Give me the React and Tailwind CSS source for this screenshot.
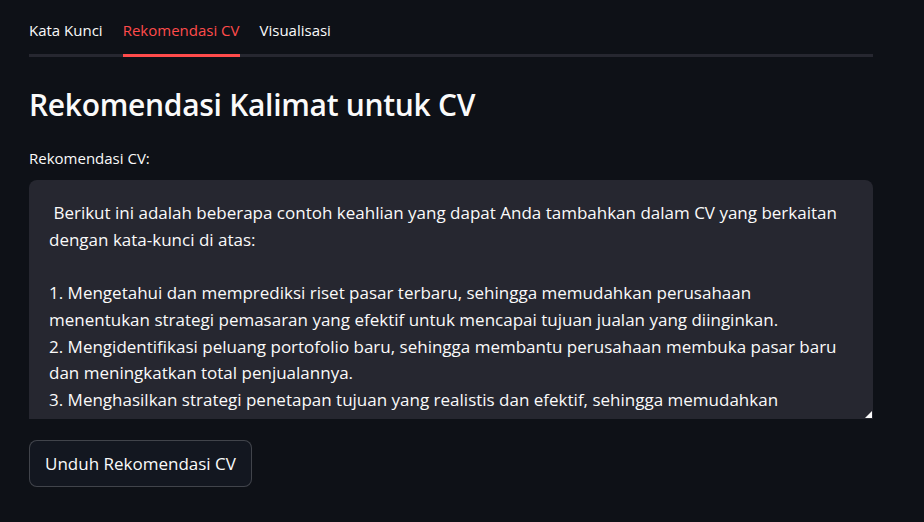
import React from "react";

const lines = [
  "\u00a0Berikut ini adalah beberapa contoh keahlian yang dapat Anda tambahkan dalam CV yang berkaitan",
  "dengan kata-kunci di atas:",
  "\u00a0",
  "1. Mengetahui dan memprediksi riset pasar terbaru, sehingga memudahkan perusahaan",
  "menentukan strategi pemasaran yang efektif untuk mencapai tujuan jualan yang diinginkan.",
  "2. Mengidentifikasi peluang portofolio baru, sehingga membantu perusahaan membuka pasar baru",
  "dan meningkatkan total penjualannya.",
  "3. Menghasilkan strategi penetapan tujuan yang realistis dan efektif, sehingga memudahkan",
];

export default function App() {
  return (
    <div
      className="w-[924px] h-[522px] bg-[#0e1117] text-[#fafafa] overflow-hidden"
      style={{ fontFamily: "'Open Sans', 'Liberation Sans', sans-serif" }}
    >
      <div className="w-[844px] ml-[29px] pt-[18px]">
        {/* Tabs */}
        <div className="relative flex gap-[20px] h-[39px] text-[15px] leading-[24px] font-medium">
          <div className="text-[#fafafa]">Kata Kunci</div>
          <div className="relative text-[#ff4b4b] h-full font-normal">
            Rekomendasi CV
            <div className="absolute left-0 right-0 bottom-0 h-[3px] bg-[#ff4b4b] z-10" />
          </div>
          <div className="text-[#fafafa]">Visualisasi</div>
          <div className="absolute left-0 right-0 bottom-0 h-[3px] bg-[#262730]" />
        </div>

        {/* Heading */}
        <h2 className="mt-[28px] text-[30px] leading-[40px] font-semibold tracking-[-0.3px]">
          Rekomendasi Kalimat untuk CV
        </h2>

        {/* Label */}
        <div className="mt-[23px] text-[15px] leading-[20px]">Rekomendasi CV:</div>

        {/* Textarea */}
        <div className="relative mt-[12px] h-[239px] bg-[#262730] rounded-t-[8px] overflow-hidden">
          <div className="pt-[20px] pl-[20px] text-[17px] leading-[26.7px] whitespace-pre">
            {lines.map((l, i) => (
              <div key={i}>{l}</div>
            ))}
          </div>
          <svg
            className="absolute right-[1px] bottom-[1px]"
            width="7"
            height="7"
            viewBox="0 0 7 7"
          >
            <path d="M7 0 L7 7 L0 7 Z" fill="#fafafa" />
          </svg>
        </div>

        {/* Button */}
        <button className="mt-[21px] h-[47px] px-[15px] rounded-[8px] border border-[#fafafa33] bg-[#131720] text-[17px] text-[#fafafa]">
          Unduh Rekomendasi CV
        </button>
      </div>
    </div>
  );
}
